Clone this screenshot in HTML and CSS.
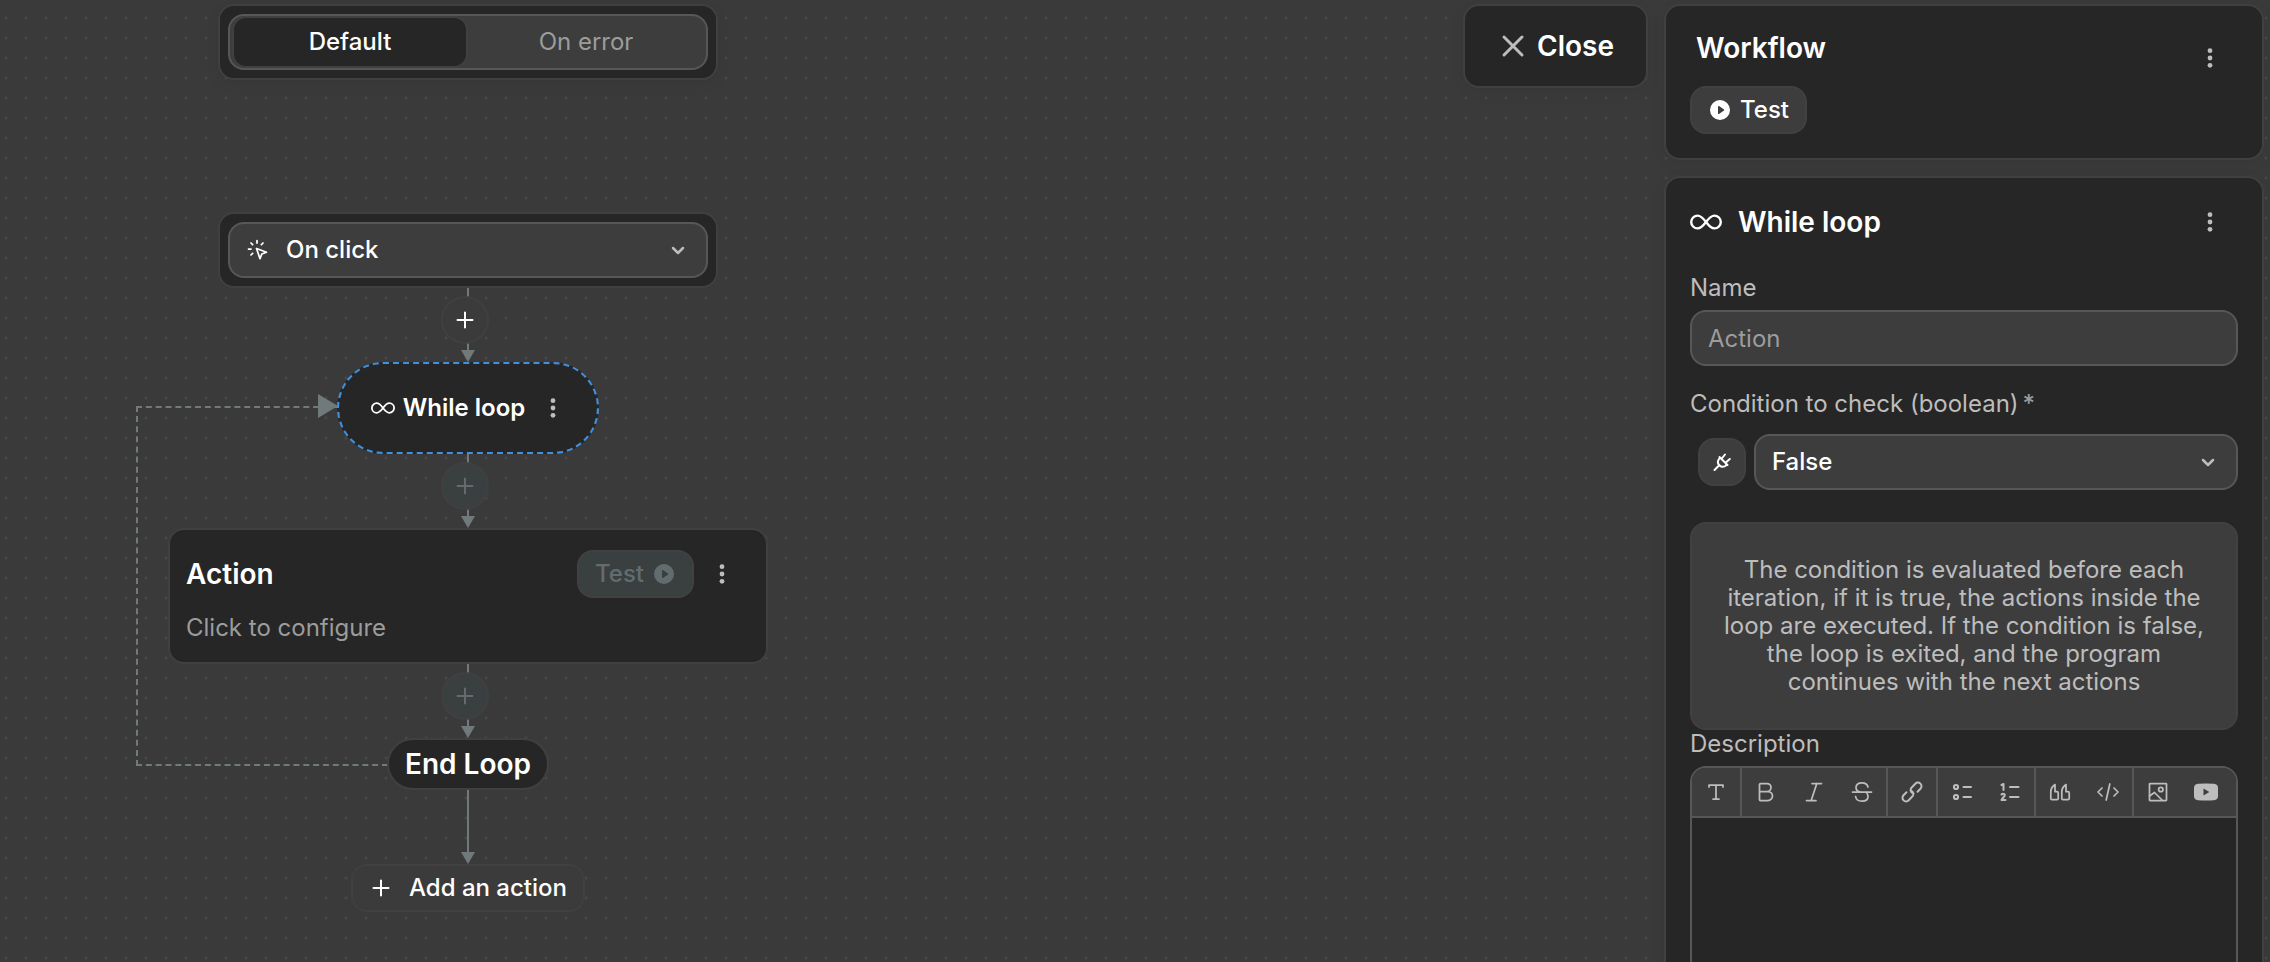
FILE: index.html
```html
<!DOCTYPE html>
<html lang="en">
  <head>
    <meta charset="UTF-8" />
    <meta name="viewport" content="width=device-width, initial-scale=1.0" />
    <title>Workflow</title>
    <link rel="stylesheet" href="styles.css">
  </head>
  <body>
    <!-- Shared icons -->
    <svg class="sprite" aria-hidden="true">
      <symbol id="plus" viewBox="0 0 24 24"><path d="M4.5 12h15M12 4.5v15" /></symbol>
      <symbol id="chevron" viewBox="0 0 24 24"><path d="M7 10l5 5 5-5" /></symbol>
      <symbol id="dots" viewBox="0 0 24 24">
        <g class="solid">
          <circle cx="12" cy="4.7" r="2.4" />
          <circle cx="12" cy="12" r="2.4" />
          <circle cx="12" cy="19.3" r="2.4" />
        </g>
      </symbol>
      <symbol id="infinity" viewBox="0 0 32 16">
        <path d="M16 8C13 4 11 1.6 7.6 1.6a6.4 6.4 0 0 0 0 12.8C11 14.400 13 12 16 8s5-6.400 8.400-6.400a6.400 6.400 0 0 1 0 12.800C21 14.400 19 12 16 8z" />
      </symbol>
      <symbol id="play" viewBox="0 0 24 24">
        <path class="solid" fill-rule="evenodd" d="M12 2a10 10 0 1 0 0 20 10 10 0 0 0 0-20zM10 8.500v7c0 .5.5.8 1 .5l5-3.500c.4-.3.4-.8 0-1.100L11 8c-.5-.3-1 0-1 .5z" />
      </symbol>
    </svg>

    <main class="canvas">
      <div class="flow">
        <div class="node-box tabs-box">
          <div class="tabs" role="tablist">
            <button class="tab active" role="tab" aria-selected="true">Default</button>
            <button class="tab" role="tab" aria-selected="false">On error</button>
          </div>
        </div>

        <div class="node-box">
          <div class="select-wrap">
            <svg class="icon select-icon" viewBox="0 0 24 24">
              <path d="M10.500 10.500l10 3.800-4.700 1.700-1.800 4.700zM11 2.500v2.500M2.500 11H5M5 5l1.600 1.600M17 5l-1.600 1.600M5 17l1.600-1.600" />
            </svg>
            <select class="select with-icon" aria-label="Trigger">
              <option>On click</option>
            </select>
            <svg class="icon chevron"><use href="#chevron" /></svg>
          </div>
        </div>

        <div class="connector">
          <svg class="arrow" viewBox="0 0 14 74"><path d="M6 0h2v62H6z" /><path d="M0 62h14L7 74z" /></svg>
          <button class="add-step" aria-label="Add step"><svg class="icon bold"><use href="#plus" /></svg></button>
        </div>

        <section class="loop">
          <div class="loop-back"></div>
          <svg class="loop-arrow" viewBox="0 0 20 24"><path d="M0 0l20 12L0 24z" /></svg>

          <div class="while-node">
            <svg class="infinity small"><use href="#infinity" /></svg>
            <span>While loop</span>
            <button class="menu-btn narrow" aria-label="While loop menu"><svg class="icon"><use href="#dots" /></svg></button>
          </div>

          <div class="connector">
            <svg class="arrow" viewBox="0 0 14 74"><path d="M6 0h2v62H6z" /><path d="M0 62h14L7 74z" /></svg>
            <button class="add-step" aria-label="Add step" disabled><svg class="icon bold"><use href="#plus" /></svg></button>
          </div>

          <article class="action-card">
            <header class="action-head">
              <h2 class="title">Action</h2>
              <button class="btn" disabled>Test <svg class="icon"><use href="#play" /></svg></button>
              <button class="menu-btn" aria-label="Action menu"><svg class="icon"><use href="#dots" /></svg></button>
            </header>
            <p class="action-text">Click to configure</p>
          </article>

          <div class="connector">
            <svg class="arrow" viewBox="0 0 14 74"><path d="M6 0h2v62H6z" /><path d="M0 62h14L7 74z" /></svg>
            <button class="add-step" aria-label="Add step" disabled><svg class="icon bold"><use href="#plus" /></svg></button>
          </div>

          <div class="end-node title">End Loop</div>
        </section>

        <div class="connector">
          <svg class="arrow" viewBox="0 0 14 74"><path d="M6 0h2v62H6z" /><path d="M0 62h14L7 74z" /></svg>
        </div>

        <button class="btn add-action"><svg class="icon bold"><use href="#plus" /></svg>Add an action</button>
      </div>
    </main>

    <button class="close-btn title">
      <svg class="icon large" viewBox="0 0 32 32"><path d="M7 7l18 18M25 7L7 25" /></svg>
      Close
    </button>

    <aside class="sidebar">
      <section class="panel workflow-panel">
        <header class="panel-head top">
          <h2 class="title workflow-title">Workflow</h2>
          <button class="menu-btn" aria-label="Workflow menu"><svg class="icon"><use href="#dots" /></svg></button>
        </header>
        <button class="btn"><svg class="icon"><use href="#play" /></svg>Test</button>
      </section>

      <section class="panel step-panel">
        <header class="panel-head">
          <svg class="infinity"><use href="#infinity" /></svg>
          <h2 class="title">While loop</h2>
          <button class="menu-btn" aria-label="Step menu"><svg class="icon"><use href="#dots" /></svg></button>
        </header>

        <div class="field">
          <label for="name">Name</label>
          <input class="input" id="name" type="text" placeholder="Action" />
        </div>

        <div class="field wide-gap">
          <label for="condition">Condition to check (boolean)<span class="required">*</span></label>
          <div class="condition-row">
            <button class="btn plug-btn" aria-label="Bind to formula">
              <svg class="icon bold" viewBox="0 0 24 24">
                <path d="M4.500 20l3.700-3.700M9.500 7l8 8M10.300 7.800L8.700 9.400a4.800 4.800 0 0 0 6.600 6.600l1.400-1.600M11.800 8.500l3.200-4M15.800 12.500l4-3.500" />
              </svg>
            </button>
            <div class="select-wrap">
              <select class="select" id="condition">
                <option>False</option>
                <option>True</option>
              </select>
              <svg class="icon chevron"><use href="#chevron" /></svg>
            </div>
          </div>
        </div>

        <p class="info">The condition is evaluated before each iteration, if it is true, the actions inside the loop are executed. If the condition is false, the loop is exited, and the program continues with the next actions</p>

        <div class="field description">
          <label for="description">Description</label>
          <div class="editor">
            <div class="toolbar">
              <div class="tool-group">
                <button class="tool" aria-label="Text"><svg class="icon" viewBox="0 0 24 24"><path d="M5 7V5h14v2M12 5v14M9 19h6" /></svg></button>
              </div>
              <div class="tool-group">
                <button class="tool" aria-label="Bold"><svg class="icon" viewBox="0 0 24 24"><path d="M6 11.500h7.500M6.500 3.500H13a4 4 0 0 1 0 8h1a4.500 4.500 0 0 1 0 9H6.500a1 1 0 0 1-1-1v-15a1 1 0 0 1 1-1z" /></svg></button>
                <button class="tool" aria-label="Italic"><svg class="icon" viewBox="0 0 24 24"><path d="M10 3.500h9.500M4.500 20.500H14M14.800 3.500L9.200 20.500" /></svg></button>
                <button class="tool" aria-label="Strikethrough"><svg class="icon" viewBox="0 0 24 24"><path d="M2.500 12h19M18 7c-.6-2.700-2.800-4.200-6-4.200-3.500 0-6 1.800-6 4.700 0 2.500 2 4.500 6 4.500M5.600 16.500c.4 3 2.900 4.700 6.400 4.700s6-1.700 6-4.700c0-1.900-.8-3.300-2-4.500" /></svg></button>
              </div>
              <div class="tool-group">
                <button class="tool" aria-label="Link"><svg class="icon bold" viewBox="0 0 24 24"><path d="M13.500 13.500l-1.500-.8a3.500 3.500 0 0 1-.5-5l3.800-4a3.600 3.600 0 0 1 5.200 5l-3 3M10.500 10.500l1.500.8a3.500 3.500 0 0 1 .5 5l-3.800 4a3.600 3.600 0 0 1-5.200-5l3-3" /></svg></button>
              </div>
              <div class="tool-group">
                <button class="tool" aria-label="Bulleted list"><svg class="icon bold" viewBox="0 0 24 24"><path d="M13.500 7h7.500M13.500 17H21" /><circle cx="6" cy="7" r="2.100" /><circle cx="6" cy="17" r="2.100" /></svg></button>
                <button class="tool" aria-label="Numbered list"><svg class="icon bold" viewBox="0 0 24 24"><path d="M12 7h8.500M12 17h8.500M3.500 5l2-1v6M3.500 14.500c1-1.200 3.800-.8 3.200 1C6.300 16.800 4.500 18 3.500 20h4" /></svg></button>
              </div>
              <div class="tool-group">
                <button class="tool" aria-label="Quote"><svg class="icon" viewBox="0 0 24 24"><path d="M7 4.500C4 6.500 2.800 9 2.800 12v6.500c0 .8.5 1.200 1.200 1.200h5c.7 0 1.200-.5 1.200-1.200V13c0-.8-.5-1.300-1.200-1.300H7zM18 4.500c-3 2-4.200 4.500-4.200 7.500v6.500c0 .8.5 1.200 1.200 1.200h5c.7 0 1.200-.5 1.200-1.200V13c0-.8-.5-1.300-1.200-1.300h-2z" /></svg></button>
                <button class="tool" aria-label="Code"><svg class="icon" viewBox="0 0 24 24"><path d="M13.800 4l-3.600 16M6 8l-4 4 4 4M18 8l4 4-4 4" /></svg></button>
              </div>
              <div class="tool-group">
                <button class="tool" aria-label="Image"><svg class="icon" viewBox="0 0 24 24"><rect x="3.500" y="3.500" width="17" height="17" rx=".6" /><path d="M3.500 16l5-3.500 7.500 7.500" /><circle cx="14.800" cy="9.500" r="2.200" /></svg></button>
                <button class="tool" aria-label="Video"><svg class="icon" viewBox="0 0 24 24"><path class="solid" fill-rule="evenodd" d="M4 3.800Q12 3.200 20 3.800q4 .4 4 4v8.400q0 3.600-4 4-8 .6-16 0-4-.4-4-4V7.800q0-3.600 4-4zM9.500 8.500v7l5.800-3.500z" /></svg></button>
              </div>
            </div>
            <textarea class="editor-area" id="description"></textarea>
          </div>
        </div>
      </section>
    </aside>
  </body>
</html>
```

FILE: styles.css
```css
* {
  margin: 0;
  padding: 0;
  box-sizing: border-box;
}

body {
  font-family: Inter, "Noto Sans", sans-serif;
  font-size: 24px;
  line-height: 28px;
  color: #fff;
  background-color: #3a3a3a;
  background-image: radial-gradient(circle at 10px 10px, #474747 1px, transparent 2px);
  background-size: 20px 20px;
  background-position: -4px 8px;
  height: 100vh;
  display: flex;
  align-items: flex-start;
  gap: 16px;
  padding: 4px 6px 0 0;
  overflow: hidden;
}

button,
input,
select,
textarea {
  font: inherit;
  color: inherit;
}

button {
  background: none;
  border: none;
  cursor: pointer;
}

.sprite {
  display: none;
}

.icon {
  width: 24px;
  height: 24px;
  flex-shrink: 0;
  fill: none;
  stroke: currentColor;
  stroke-width: 1.75;
  stroke-linecap: round;
  stroke-linejoin: round;
}

.icon.bold {
  stroke-width: 2;
}

.icon.large {
  width: 32px;
  height: 32px;
  stroke-width: 3;
  color: #bdbdbd;
}

.solid {
  fill: currentColor;
  stroke: none;
}

.infinity {
  width: 32px;
  height: 16px;
  fill: none;
  stroke: currentColor;
  stroke-width: 2.4;
}

.infinity.small {
  width: 24px;
}

.title {
  font-size: 28px;
  line-height: 36px;
  font-weight: 600;
}

/* Buttons */
.btn {
  display: inline-flex;
  align-items: center;
  gap: 8px;
  height: 48px;
  padding: 0 16px;
  background: #3d3d3d;
  border: 2px solid #414141;
  border-radius: 16px;
  font-weight: 500;
}

.btn:disabled {
  background: #3a3f40;
  color: #626c6e;
}

.menu-btn {
  display: flex;
  align-items: center;
  justify-content: center;
  width: 56px;
  height: 56px;
  color: #bdbdbd;
}

.menu-btn.narrow {
  width: 40px;
}

/* Canvas */
.canvas {
  flex: 1;
  padding-left: 168px;
}

.flow {
  width: 600px;
  display: flex;
  flex-direction: column;
  align-items: center;
}

.node-box {
  width: 500px;
  padding: 8px;
  background: #262626;
  border: 2px solid #404040;
  border-radius: 16px;
}

.tabs-box {
  margin-bottom: 132px;
  box-shadow: 0 4px 16px rgba(0, 0, 0, 0.05);
}

.tabs {
  display: flex;
  height: 56px;
  padding: 0 2px;
  background: #3d3d3d;
  border: 2px solid #575757;
  border-radius: 16px;
}

.tab {
  flex: 1;
  border: 2px solid transparent;
  border-radius: 14px;
  color: #9c9c9c;
}

.tab.active {
  background: #262626;
  border-color: #404040;
  color: #fff;
  font-weight: 500;
}

.connector {
  position: relative;
  display: flex;
  align-items: center;
  justify-content: center;
  height: 74px;
}

.arrow {
  width: 14px;
  height: 74px;
  fill: #717a7b;
}

/* plus button lies on the line */
.add-step {
  position: absolute;
  top: 8px;
  right: -14px;
  display: flex;
  align-items: center;
  justify-content: center;
  width: 48px;
  height: 48px;
  background: #3b3b3b;
  border: 2px solid #404040;
  border-radius: 50%;
}

.add-step:disabled {
  background: #3a3f40;
  color: #626c6e;
}

.loop {
  position: relative;
  width: 100%;
  display: flex;
  flex-direction: column;
  align-items: center;
}

.while-node {
  position: relative;
  display: flex;
  align-items: center;
  gap: 8px;
  height: 92px;
  padding: 0 24px 0 32px;
  background: #262626;
  border: 2px dashed #4090e0;
  border-radius: 46px;
  font-weight: 600;
}

.loop-back {
  position: absolute;
  top: 44px;
  bottom: 24px;
  left: -32px;
  width: 252px;
  border: 2px dashed #717a7b;
  border-right: none;
}

.loop-arrow {
  position: absolute;
  top: 32px;
  left: 150px;
  width: 20px;
  height: 24px;
  fill: #717a7b;
}

.action-card {
  position: relative;
  width: 100%;
  padding: 16px;
  background: #262626;
  border: 2px solid #404040;
  border-radius: 16px;
}

.action-head {
  display: flex;
  align-items: center;
}

.action-head .title {
  flex: 1;
}

.action-text {
  margin: 12px 0 4px;
  color: #9c9c9c;
}

.end-node {
  position: relative;
  padding: 6px 16px;
  background: #262626;
  border: 2px solid #404040;
  border-radius: 26px;
}

.add-action {
  gap: 16px;
  background: #3b3b3b;
  border-color: #404040;
}

/* Top right close */
.close-btn {
  display: flex;
  align-items: center;
  gap: 8px;
  height: 84px;
  padding: 0 32px;
  background: #262626;
  border: 2px solid #404040;
  border-radius: 16px;
  box-shadow: 0 4px 16px rgba(0, 0, 0, 0.05);
}

/* Sidebar */
.sidebar {
  width: 600px;
  display: flex;
  flex-direction: column;
  gap: 16px;
}

.panel {
  padding: 24px;
  background: #262626;
  border: 2px solid #404040;
  border-radius: 16px;
  box-shadow: 0 4px 16px rgba(0, 0, 0, 0.05);
}

.step-panel {
  padding-top: 16px;
}

.panel-head {
  display: flex;
  align-items: center;
  gap: 16px;
}

.panel-head.top {
  align-items: flex-start;
}

.panel-head .title {
  flex: 1;
}

.workflow-title {
  padding-left: 6px;
}

.field {
  display: flex;
  flex-direction: column;
  gap: 8px;
  margin-top: 24px;
  color: #bdbdbd;
}

.field.wide-gap {
  gap: 16px;
}

.field.description {
  margin-top: 0;
}

.required {
  margin-left: 4px;
  color: #9c9c9c;
  font-weight: 500;
}

.input,
.select {
  width: 100%;
  height: 56px;
  padding: 0 16px;
  background: #3d3d3d;
  border: 2px solid #575757;
  border-radius: 16px;
  color: #fff;
}

.input::placeholder {
  color: #9c9c9c;
}

.select-wrap {
  position: relative;
  flex: 1;
}

.select {
  display: block;
  appearance: none;
  font-weight: 500;
}

.select.with-icon {
  padding-left: 56px;
}

.select-icon {
  position: absolute;
  top: 16px;
  left: 18px;
}

.chevron {
  position: absolute;
  top: 16px;
  right: 18px;
  color: #bdbdbd;
  stroke-width: 2.5;
  pointer-events: none;
}

.condition-row {
  display: flex;
  align-items: center;
  gap: 8px;
  padding-left: 8px;
}

.plug-btn {
  justify-content: center;
  width: 48px;
  padding: 0;
  color: #fff;
}

.info {
  margin-top: 32px;
  padding: 32px;
  background: #3d3d3d;
  border: 2px solid #414141;
  border-radius: 16px;
  color: #bdbdbd;
  text-align: center;
}

.editor {
  border: 2px solid #575757;
  border-radius: 16px;
  overflow: hidden;
}

.toolbar {
  display: flex;
  background: #3d3d3d;
  border-bottom: 2px solid #575757;
}

.tool-group {
  display: flex;
  border-right: 2px solid #575757;
}

.tool-group:last-child {
  border-right: none;
}

.tool {
  display: flex;
  align-items: center;
  justify-content: center;
  width: 48px;
  height: 48px;
  color: #bdbdbd;
}

.editor-area {
  display: block;
  width: 100%;
  height: 180px;
  padding: 16px;
  background: #262626;
  border: none;
  outline: none;
  resize: none;
}
```
